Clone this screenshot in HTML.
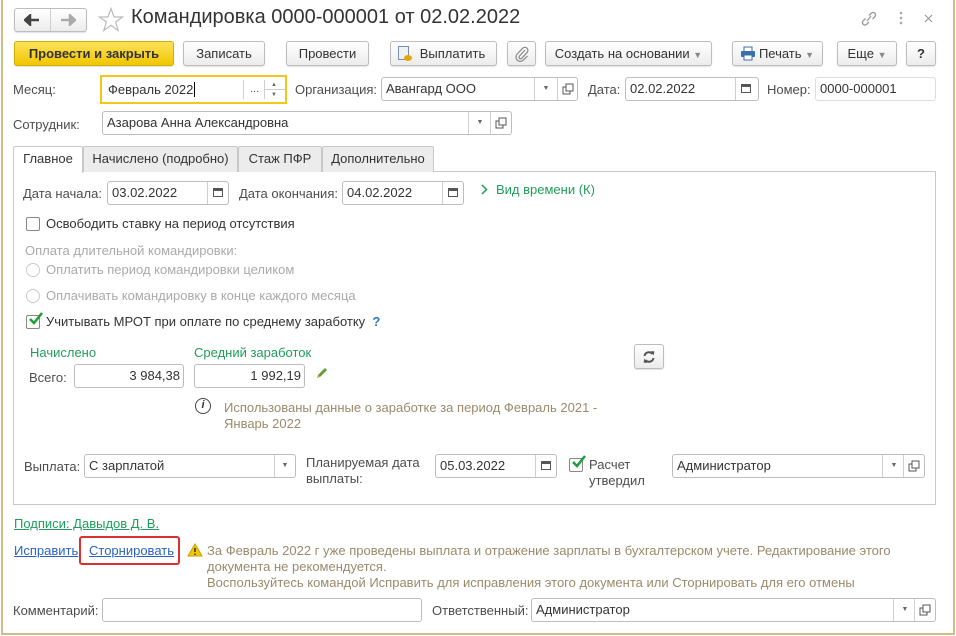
<!DOCTYPE html>
<html><head><meta charset="utf-8"><style>
*{box-sizing:border-box;margin:0;padding:0}
body{width:956px;height:636px;background:#fff;font-family:"Liberation Sans",Arial,sans-serif;font-size:13px;color:#4d4d4d;position:relative;overflow:hidden}
.a{position:absolute;white-space:nowrap}
.frame{position:absolute;left:1px;top:0;width:954px;height:635px;border-left:2px solid #cdbf86;border-right:2px solid #cdbf86;border-bottom:2px solid #cdbf86}
.btn{position:absolute;height:25px;border:1px solid #bdbdbd;border-radius:3px;background:linear-gradient(#fff,#ececec);color:#333;text-align:center;line-height:23px;font-size:13px;box-shadow:0 1px 1px rgba(0,0,0,.12)}
.inp{position:absolute;height:24px;border:1px solid #bdbdbd;border-radius:3px;background:#fff;color:#333;line-height:22px;padding-left:4px}
.sep{position:absolute;top:0;bottom:0;border-left:1px solid #cfcfcf}
.dd{position:absolute;top:0;width:22px;height:22px;text-align:center;font-size:7px;color:#666;line-height:22px}
.lbl{color:#4d4d4d}
.grn{color:#1e9e5a}
.cb{position:absolute;width:14px;height:14px;border:1px solid #888;border-radius:2px;background:#fff}
.rad{position:absolute;width:14px;height:14px;border:1px solid #ccc;border-radius:50%}
.tab{position:absolute;top:146px;height:26px;border:1px solid #c8c8c8;border-bottom:none;background:#ececec;color:#333;line-height:24px;text-align:center;border-radius:2px 2px 0 0}
.cal{position:absolute;width:10px;height:9px;border:1px solid #555;border-top-width:3px}
.copy{position:absolute;top:5px;width:12px;height:12px}
.chk{position:absolute;width:16px;height:14px}
.ar{font-size:9px;color:#888}
</style></head><body>
<div class="frame"></div>

<!-- nav -->
<div class="btn" style="left:14px;top:8px;width:73px;height:24px"></div>
<div class="sep" style="left:50px;top:9px;height:22px"></div>
<svg class="a" style="left:24px;top:14px" width="16" height="12"><path d="M1 6H15M1 6L6 1.5V10.5Z" stroke="#444" stroke-width="2.5" fill="#444"/></svg>
<svg class="a" style="left:60px;top:14px" width="16" height="12"><path d="M1 6H15M15 6L10 1.5V10.5Z" stroke="#aaa" stroke-width="2.5" fill="#aaa"/></svg>
<svg class="a" style="left:98px;top:7px" width="26" height="25"><path d="M13 1.5L16 10H24.5L17.6 15L20.2 23.5L13 18.3L5.8 23.5L8.4 15L1.5 10H10Z" fill="none" stroke="#bbb" stroke-width="1.2"/></svg>
<div class="a" style="left:131px;top:6px;font-size:20px;color:#333">Командировка 0000-000001 от 02.02.2022</div>
<svg class="a" style="left:860px;top:10px" width="18" height="16"><path d="M7 11L11 6M5.5 8.5L3 11a2.5 2.5 0 0 0 3.5 3.5L9 12M9 5.5L11.5 3a2.5 2.5 0 0 1 3.5 3.5L12.5 9" stroke="#999" stroke-width="1.3" fill="none"/></svg>
<svg class="a" style="left:898px;top:11px" width="6" height="14"><circle cx="3" cy="2" r="1.3" fill="#aaa"/><circle cx="3" cy="7" r="1.3" fill="#aaa"/><circle cx="3" cy="12" r="1.3" fill="#aaa"/></svg>
<svg class="a" style="left:924px;top:14px" width="9" height="9"><path d="M1 1L8 8M8 1L1 8" stroke="#999" stroke-width="1.2"/></svg>

<!-- toolbar -->
<div class="btn" style="left:14px;top:41px;width:160px;background:linear-gradient(#fde15a,#f1c600);border-color:#d1ae00;font-weight:bold;color:#333">Провести и закрыть</div>
<div class="btn" style="left:183px;top:41px;width:82px">Записать</div>
<div class="btn" style="left:286px;top:41px;width:83px">Провести</div>
<div class="btn" style="left:390px;top:41px;width:107px;padding-left:18px">Выплатить</div>
<div class="a" style="left:398px;top:46px;width:11px;height:14px;border:1px solid #7a8fb0;background:#eef2f8"></div>
<div class="a" style="left:404px;top:55px;width:8px;height:6px;background:#e3a800;border-radius:50%"></div>
<div class="btn" style="left:507px;top:41px;width:29px"></div>
<svg class="a" style="left:514px;top:45px" width="15" height="17"><path d="M11 5L5.5 11a1.6 1.6 0 0 0 2.3 2.3L13 7.5a3 3 0 0 0-4.3-4.3L3.2 9a4.3 4.3 0 0 0 6.1 6.1L13.5 11" stroke="#888" stroke-width="1.2" fill="none"/></svg>
<div class="btn" style="left:545px;top:41px;width:167px">Создать на основании <span class="ar">▼</span></div>
<div class="btn" style="left:732px;top:41px;width:91px;padding-left:18px">Печать <span class="ar">▼</span></div>
<svg class="a" style="left:740px;top:46px" width="16" height="15"><rect x="4" y="1" width="8" height="5" fill="#fff" stroke="#3a6ea8"/><rect x="1" y="5" width="14" height="6" rx="1" fill="#3a6ea8"/><rect x="4" y="9" width="8" height="5" fill="#fff" stroke="#3a6ea8"/></svg>
<div class="btn" style="left:837px;top:41px;width:60px">Еще <span class="ar">▼</span></div>
<div class="btn" style="left:906px;top:41px;width:30px;font-weight:bold">?</div>

<!-- row month -->
<div class="a lbl" style="left:13px;top:82px">Месяц:</div>
<div class="inp" style="left:100px;top:75px;width:187px;height:29px;border:2px solid #f5c518;border-radius:0;padding-left:6px;line-height:25px">Февраль 2022<span style="border-left:1px solid #000;margin-left:1px"></span>
<div class="sep" style="left:141px;top:3px;bottom:3px"></div><div class="a" style="left:148px;top:0;font-size:11px;color:#555">...</div>
<div class="sep" style="left:162px;top:3px;bottom:3px"></div><div class="a" style="left:169px;top:3px;font-size:6px;color:#666;line-height:10px">▲<br>▼</div>
<div class="a" style="left:163px;top:12px;width:20px;border-top:1px solid #ccc"></div></div>
<div class="a lbl" style="left:295px;top:82px">Организация:</div>
<div class="inp" style="left:381px;top:77px;width:197px">Авангард ООО<div class="sep" style="left:152px"></div><div class="dd" style="left:153px">▼</div><div class="sep" style="left:175px"></div><svg class="copy" style="left:180px"><path d="M4 1H11V8H4Z M4 4H1V11H8V8" stroke="#555" fill="none"/></svg></div>
<div class="a lbl" style="left:588px;top:82px">Дата:</div>
<div class="inp" style="left:625px;top:77px;width:134px">02.02.2022<div class="sep" style="left:109px"></div><div class="cal" style="left:115px;top:6px"></div></div>
<div class="a lbl" style="left:767px;top:82px">Номер:</div>
<div class="inp" style="left:815px;top:77px;width:121px;border-color:#ddd">0000-000001</div>

<div class="a lbl" style="left:13px;top:117px">Сотрудник:</div>
<div class="inp" style="left:102px;top:111px;width:410px">Азарова Анна Александровна<div class="sep" style="left:365px"></div><div class="dd" style="left:366px">▼</div><div class="sep" style="left:387px"></div><svg class="copy" style="left:392px"><path d="M4 1H11V8H4Z M4 4H1V11H8V8" stroke="#555" fill="none"/></svg></div>

<!-- tabs -->
<div class="a" style="left:13px;top:171px;width:923px;height:334px;border:1px solid #c8c8c8"></div>
<div class="tab" style="left:13px;width:70px;background:#fff;height:27px">Главное</div>
<div class="tab" style="left:83px;width:155px">Начислено (подробно)</div>
<div class="tab" style="left:238px;width:84px">Стаж ПФР</div>
<div class="tab" style="left:322px;width:112px">Дополнительно</div>

<div class="a lbl" style="left:23px;top:186px">Дата начала:</div>
<div class="inp" style="left:107px;top:181px;width:122px">03.02.2022<div class="sep" style="left:99px"></div><div class="cal" style="left:105px;top:6px"></div></div>
<div class="a lbl" style="left:239px;top:186px">Дата окончания:</div>
<div class="inp" style="left:342px;top:181px;width:122px">04.02.2022<div class="sep" style="left:99px"></div><div class="cal" style="left:105px;top:6px"></div></div>
<svg class="a" style="left:481px;top:184px" width="7" height="11"><path d="M1 1L5.5 5.5L1 10" stroke="#1e9e5a" stroke-width="1.5" fill="none"/></svg>
<div class="a grn" style="left:496px;top:182px">Вид времени (К)</div>

<div class="cb" style="left:26px;top:217px"></div>
<div class="a" style="left:46px;top:216px;color:#333">Освободить ставку на период отсутствия</div>
<div class="a" style="left:25px;top:243px;color:#aaa">Оплата длительной командировки:</div>
<div class="rad" style="left:26px;top:263px"></div>
<div class="a" style="left:46px;top:262px;color:#aaa">Оплатить период командировки целиком</div>
<div class="rad" style="left:26px;top:289px"></div>
<div class="a" style="left:46px;top:288px;color:#aaa">Оплачивать командировку в конце каждого месяца</div>
<div class="cb" style="left:26px;top:315px"></div>
<svg class="chk" style="left:28px;top:311px"><path d="M2 8L6 12L14 2" stroke="#1e9e3a" stroke-width="2.5" fill="none"/></svg>
<div class="a" style="left:46px;top:314px;color:#333">Учитывать МРОТ при оплате по среднему заработку&nbsp;&nbsp;<span style="color:#2a7bc0;font-weight:bold">?</span></div>

<div class="a grn" style="left:30px;top:345px">Начислено</div>
<div class="a grn" style="left:194px;top:345px">Средний заработок</div>
<div class="a lbl" style="left:29px;top:370px">Всего:</div>
<div class="inp" style="left:74px;top:364px;width:110px;text-align:right;padding-right:3px">3 984,38</div>
<div class="inp" style="left:194px;top:364px;width:111px;text-align:right;padding-right:3px">1 992,19</div>
<svg class="a" style="left:315px;top:366px" width="14" height="14"><path d="M2 12L3 9L10 2L12 4L5 11Z" fill="#5aa02c"/><path d="M2 12L3 9L5 11Z" fill="#d9a860"/></svg>
<div class="btn" style="left:634px;top:344px;width:30px"></div>
<svg class="a" style="left:642px;top:350px" width="14" height="14"><path d="M2.5 6A4.5 4.5 0 0 1 10.5 4M11.5 8A4.5 4.5 0 0 1 3.5 10" stroke="#555" stroke-width="2" fill="none"/><path d="M9 1L12.5 1.5L11.5 5.5Z M5 13L1.5 12.5L2.5 8.5Z" fill="#555"/></svg>
<div class="a" style="left:195px;top:398px;width:16px;height:16px;border:1.5px solid #444;border-radius:50%;font-size:11px;font-weight:bold;text-align:center;line-height:13px;color:#333;font-style:italic">i</div>
<div class="a" style="left:224px;top:400px;color:#9a8a6a;line-height:16px">Использованы данные о заработке за период Февраль 2021 -<br>Январь 2022</div>

<div class="a lbl" style="left:24px;top:459px">Выплата:</div>
<div class="inp" style="left:84px;top:454px;width:212px">С зарплатой<div class="sep" style="left:189px"></div><div class="dd" style="left:189px">▼</div></div>
<div class="a lbl" style="left:306px;top:455px;line-height:16px">Планируемая дата<br>выплаты:</div>
<div class="inp" style="left:435px;top:454px;width:122px">05.03.2022<div class="sep" style="left:99px"></div><div class="cal" style="left:105px;top:6px"></div></div>
<div class="cb" style="left:569px;top:458px"></div>
<svg class="chk" style="left:571px;top:454px"><path d="M2 8L6 12L14 2" stroke="#1e9e3a" stroke-width="2.5" fill="none"/></svg>
<div class="a lbl" style="left:589px;top:457px;line-height:16px">Расчет<br>утвердил</div>
<div class="inp" style="left:672px;top:454px;width:253px">Администратор<div class="sep" style="left:209px"></div><div class="dd" style="left:210px">▼</div><div class="sep" style="left:230px"></div><svg class="copy" style="left:235px"><path d="M4 1H11V8H4Z M4 4H1V11H8V8" stroke="#555" fill="none"/></svg></div>

<!-- bottom -->
<div class="a grn" style="left:14px;top:516px;text-decoration:underline">Подписи: Давыдов Д. В.</div>
<div class="a" style="left:14px;top:543px;color:#2a63c2;text-decoration:underline">Исправить</div>
<div class="a" style="left:79px;top:536px;width:101px;height:29px;border:2.5px solid #d93030;border-radius:3px"></div>
<div class="a" style="left:89px;top:543px;color:#2a63c2;text-decoration:underline">Сторнировать</div>
<svg class="a" style="left:187px;top:543px" width="16" height="14"><path d="M8 1L15 13H1Z" fill="#f2c600" stroke="#c9a000"/><path d="M8 5V9M8 10.5V12" stroke="#333" stroke-width="1.5"/></svg>
<div class="a" style="left:207px;top:543px;color:#9a8a6a;line-height:16px">За Февраль 2022 г уже проведены выплата и отражение зарплаты в бухгалтерском учете. Редактирование этого<br>документа не рекомендуется.<br>Воспользуйтесь командой Исправить для исправления этого документа или Сторнировать для его отмены</div>

<div class="a lbl" style="left:13px;top:603px">Комментарий:</div>
<div class="inp" style="left:102px;top:598px;width:320px"></div>
<div class="a lbl" style="left:432px;top:603px">Ответственный:</div>
<div class="inp" style="left:531px;top:598px;width:405px">Администратор<div class="sep" style="left:361px"></div><div class="dd" style="left:362px">▼</div><div class="sep" style="left:382px"></div><svg class="copy" style="left:387px"><path d="M4 1H11V8H4Z M4 4H1V11H8V8" stroke="#555" fill="none"/></svg></div>
</body></html>
